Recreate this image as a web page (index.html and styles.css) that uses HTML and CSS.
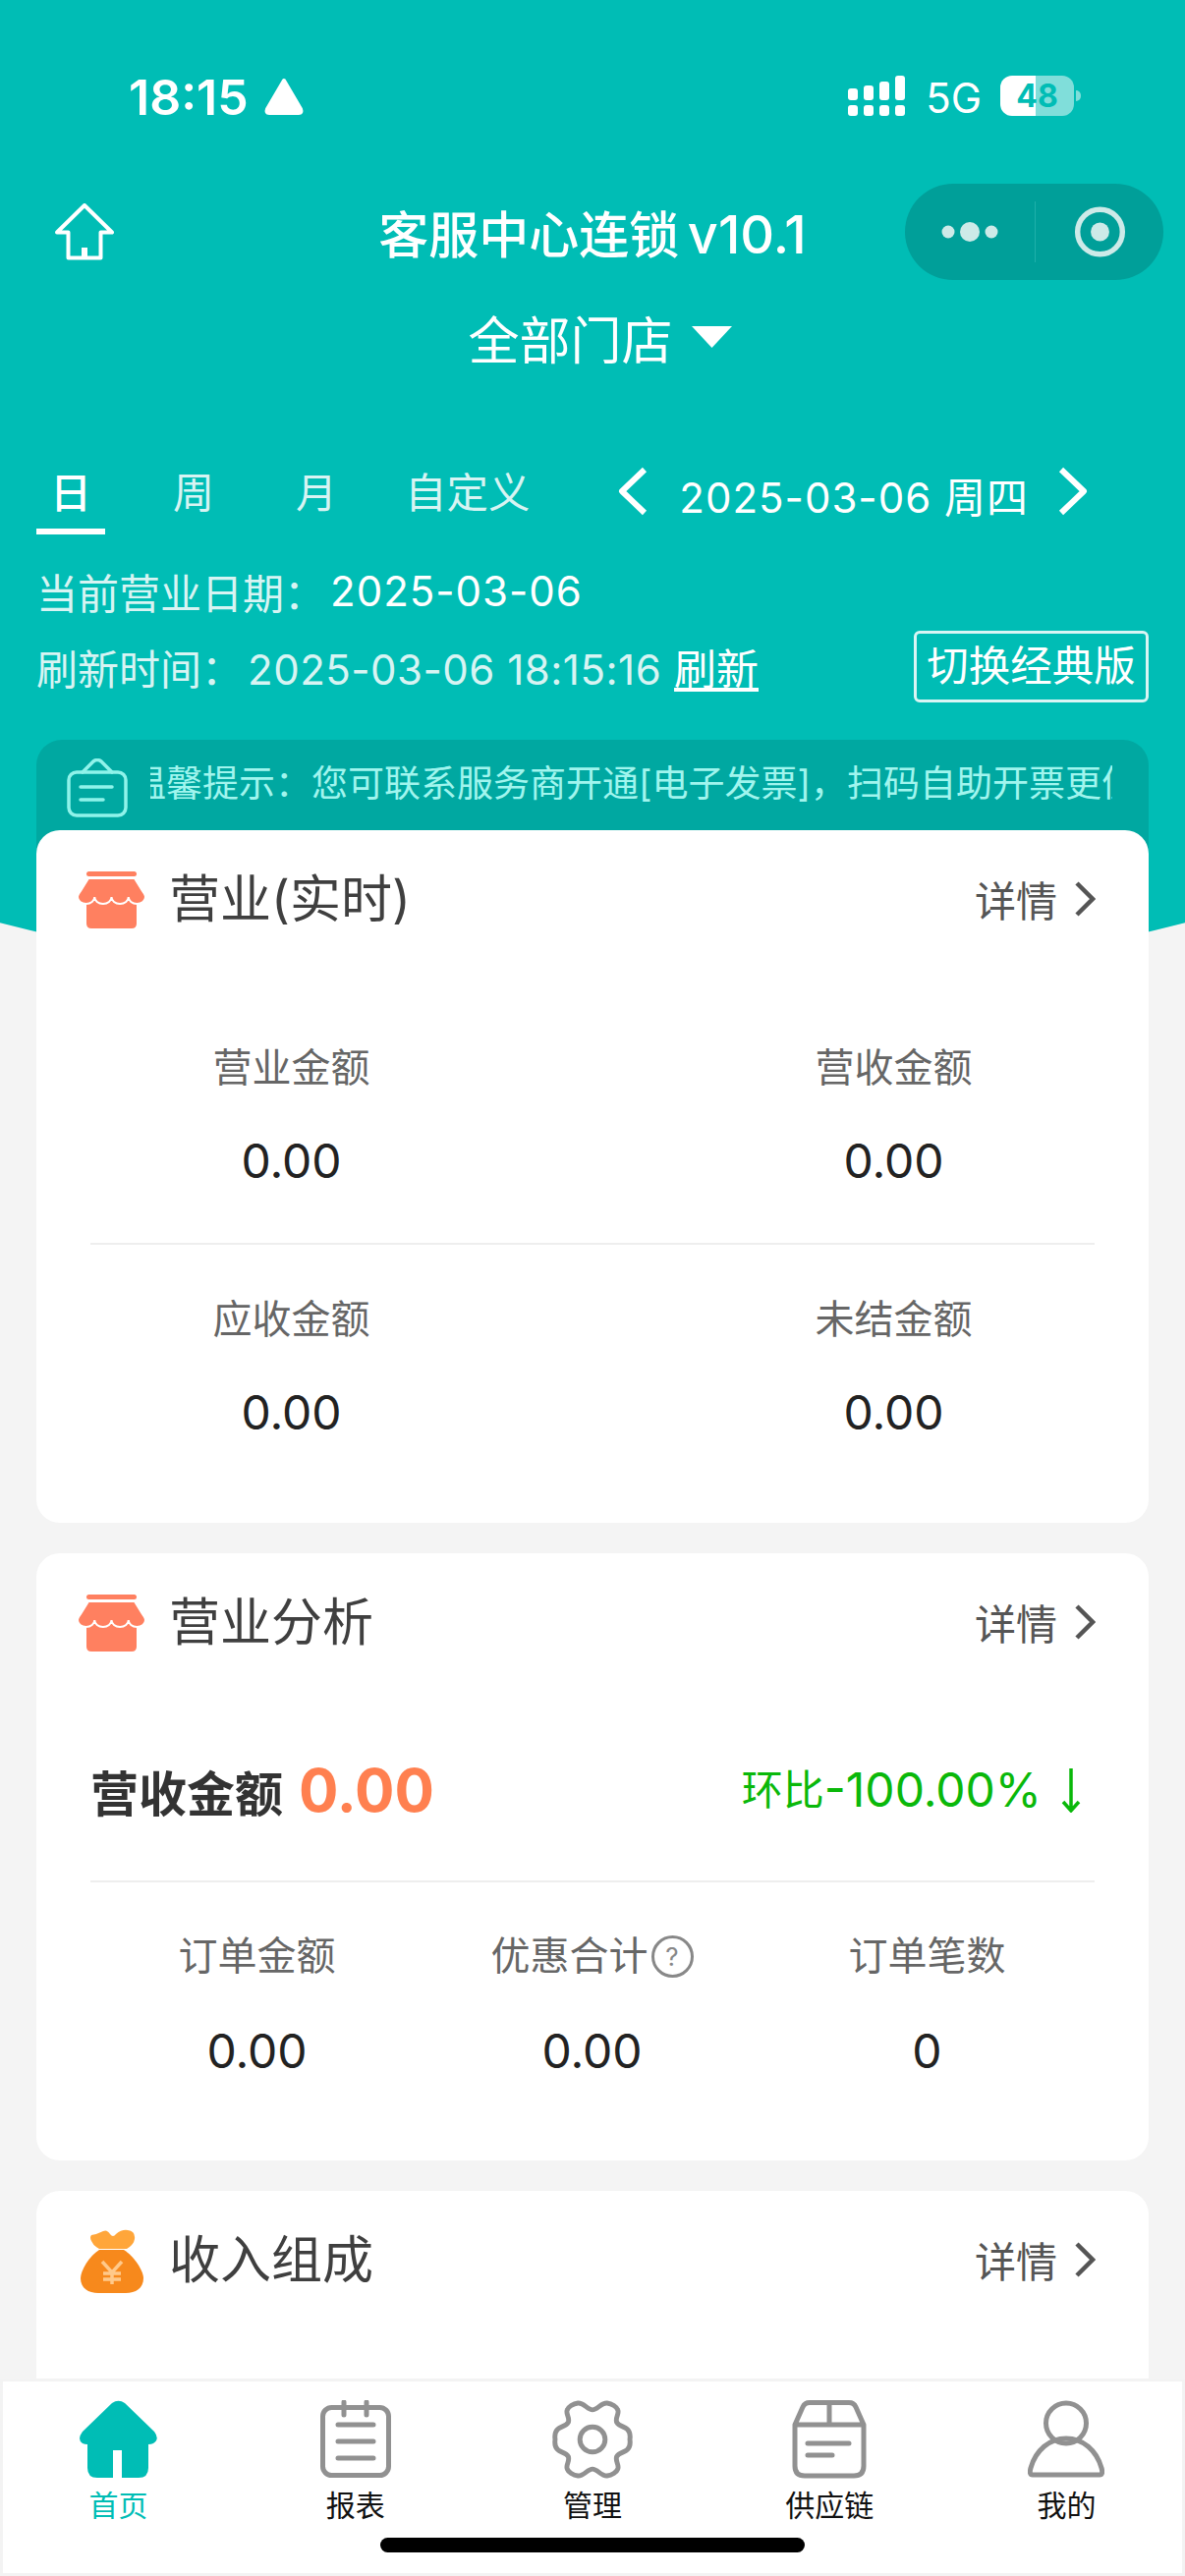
FILE: index.html
```html
<!DOCTYPE html>
<html lang="zh-CN">
<head>
<meta charset="utf-8">
<title>客服中心连锁</title>
<link rel="stylesheet" href="styles.css">
</head>
<body>
<div class="page">
  <header class="hero">
    <div class="status">
      <span class="clock">18:15</span>
      <svg class="loc" width="42" height="38" viewBox="0 0 42 38"><path d="M21 3 L38 32 Q39.5 36 36 36 H6 Q2.5 36 4 32 Z" fill="#fff" stroke="#fff" stroke-width="4" stroke-linejoin="round"/></svg>
      <div class="status-right">
        <svg class="signal" width="58" height="41" viewBox="0 0 58 41" fill="#fff">
          <rect x="0" y="13" width="10" height="12" rx="3"/><rect x="16" y="10" width="10" height="15" rx="3"/><rect x="32" y="6" width="10" height="19" rx="3"/><rect x="48" y="0" width="10" height="25" rx="3"/>
          <rect x="0" y="30" width="10" height="11" rx="3"/><rect x="16" y="30" width="10" height="11" rx="3"/><rect x="32" y="30" width="10" height="11" rx="3"/><rect x="48" y="30" width="10" height="11" rx="3"/>
        </svg>
        <span class="net">5G</span>
        <span class="battery">48</span>
        <span class="battery-nub"></span>
      </div>
    </div>
    <nav class="navbar">
      <svg class="nav-home" width="60" height="58" viewBox="0 0 60 58"><path d="M30 2 L58 29.5 H46.5 V55.5 H13.5 V29.5 H2 Z" fill="none" stroke="#fff" stroke-width="4" stroke-linejoin="round"/><rect x="27" y="45" width="6" height="10" fill="#fff"/></svg>
      <h1 class="nav-title">客服中心连锁 <span class="nav-version">v10.1</span></h1>
      <div class="capsule">
        <svg class="capsule-part" width="132" height="62" viewBox="0 0 132 62" fill="#cdeae8"><circle cx="44" cy="31" r="6.5"/><circle cx="66" cy="31" r="10"/><circle cx="88" cy="31" r="6.5"/></svg>
        <svg class="capsule-part" width="131" height="62" viewBox="0 0 131 62" fill="none"><circle cx="66" cy="31" r="23" stroke="#cdeae8" stroke-width="5.5"/><circle cx="66" cy="31" r="9.5" fill="#cdeae8"/></svg>
      </div>
    </nav>
    <div class="store">
      <span>全部门店</span>
      <svg width="43" height="22" viewBox="0 0 43 22"><path d="M1 0 H42 L21.5 22 Z" fill="#fff"/></svg>
    </div>
    <div class="range">
      <div class="tabs">
        <span class="tab tab-on">日</span>
        <span class="tab">周</span>
        <span class="tab">月</span>
        <span class="tab tab-wide">自定义</span>
      </div>
      <div class="day-nav">
        <svg width="30" height="50" viewBox="0 0 30 50"><path d="M27 3 L4 25 L27 47" fill="none" stroke="#fff" stroke-width="6" stroke-linejoin="round"/></svg>
        <span class="day">2025-03-06 周四</span>
        <svg width="30" height="50" viewBox="0 0 30 50"><path d="M3 3 L26 25 L3 47" fill="none" stroke="#fff" stroke-width="6" stroke-linejoin="round"/></svg>
      </div>
    </div>
    <div class="info-row">
      <span class="info-label">当前营业日期：</span><span class="info-strong">2025-03-06</span>
    </div>
    <div class="info-row info-row-split">
      <div>
        <span class="info-label">刷新时间：</span><span class="info-time">2025-03-06 18:15:16</span>
        <a class="refresh">刷新</a>
      </div>
      <span class="classic">切换经典版</span>
    </div>
    <div class="notice">
      <svg class="notice-icon" width="62" height="60" viewBox="0 0 62 60" fill="none" stroke="#8ff3ea" stroke-width="3.5" stroke-linecap="round" stroke-linejoin="round"><path d="M16 14 L27 3 Q31 0 35 3 L46 14"/><rect x="2" y="14" width="58" height="44" rx="8"/><path d="M14 29 H46 M14 42 H37"/></svg>
      <div class="notice-window"><span class="notice-text">温馨提示：您可联系服务商开通[电子发票]，扫码自助开票更便捷</span></div>
    </div>
  </header>

  <main class="cards">
    <section class="card">
      <div class="card-head">
        <svg class="head-icon" width="67" height="58" viewBox="0 0 67 58"><use href="#shop"/></svg>
        <h2 class="card-title">营业(实时)</h2>
        <span class="more">详情<svg width="22" height="36" viewBox="0 0 22 36"><path d="M3 2 L19 18 L3 34" fill="none" stroke="#555" stroke-width="4.5"/></svg></span>
      </div>
      <div class="stats-body">
        <div class="stat-row">
          <div class="stat"><div class="stat-label">营业金额</div><div class="stat-value">0.00</div></div>
          <div class="stat"><div class="stat-label">营收金额</div><div class="stat-value">0.00</div></div>
        </div>
        <div class="stat-row stat-row-last">
          <div class="stat"><div class="stat-label">应收金额</div><div class="stat-value">0.00</div></div>
          <div class="stat"><div class="stat-label">未结金额</div><div class="stat-value">0.00</div></div>
        </div>
      </div>
    </section>

    <section class="card">
      <div class="card-head">
        <svg class="head-icon" width="67" height="58" viewBox="0 0 67 58"><use href="#shop"/></svg>
        <h2 class="card-title">营业分析</h2>
        <span class="more">详情<svg width="22" height="36" viewBox="0 0 22 36"><path d="M3 2 L19 18 L3 34" fill="none" stroke="#555" stroke-width="4.5"/></svg></span>
      </div>
      <div class="analysis">
        <div class="headline">
          <span class="headline-label">营收金额</span>
          <span class="headline-value">0.00</span>
          <span class="trend"><span class="trend-cn">环比</span>-100.00%<svg class="trend-arrow" width="20" height="46" viewBox="0 0 20 46"><path d="M10 1 V44 M2 35 L10 44 L18 35" fill="none" stroke="#0ab80a" stroke-width="3.5"/></svg></span>
        </div>
        <div class="triple">
          <div class="stat"><div class="stat-label">订单金额</div><div class="stat-value">0.00</div></div>
          <div class="stat"><div class="stat-label">优惠合计<span class="hint">?</span></div><div class="stat-value">0.00</div></div>
          <div class="stat"><div class="stat-label">订单笔数</div><div class="stat-value">0</div></div>
        </div>
      </div>
    </section>

    <section class="card card-tall">
      <div class="card-head">
        <svg class="head-icon" width="67" height="65" viewBox="0 0 67 65">
          <path d="M21 21 H46 C56 27 66 42 66 50 C66 60 58 65 48 65 H20 C10 65 2 60 2 50 C2 42 11 27 21 21 Z" fill="#f7891c"/>
          <path d="M13 6 Q19 5 25 2 Q29 0 32 5 Q35 9 38 5 Q44 0 50 1 Q58 2 57 10 Q56 16 49 20 H21 Q15 17 13 12 Q11 8 13 6 Z" fill="#ffa63a"/>
          <path d="M24 33 L34 44 L44 33 M34 44 V56 M25 45 H43 M25 51 H43" fill="none" stroke="#ffc98a" stroke-width="3.5"/>
        </svg>
        <h2 class="card-title">收入组成</h2>
        <span class="more">详情<svg width="22" height="36" viewBox="0 0 22 36"><path d="M3 2 L19 18 L3 34" fill="none" stroke="#555" stroke-width="4.5"/></svg></span>
      </div>
    </section>
  </main>

  <footer class="tabbar">
    <div class="tabbar-item tabbar-on">
      <svg width="80" height="80" viewBox="0 0 80 80"><path d="M33 3 Q39.5 -1.5 46 3 L76 32 Q82 40 75 44 Q73 45 70 45 V69 Q70 79 60 79 H43 V51 H34 V79 H18 Q8 79 8 69 V45 Q5 45 3 44 Q-3 40 3 32 Z" fill="#00bdb5"/></svg>
      <span>首页</span>
    </div>
    <div class="tabbar-item">
      <svg width="72" height="80" viewBox="0 0 72 80" fill="none" stroke="#919191" stroke-width="5" stroke-linecap="round"><rect x="2.5" y="7.5" width="67" height="69" rx="9"/><path d="M24 2 V15 M47 2 V15 M18 25 H54 M18 42 H54 M18 59 H54"/></svg>
      <span>报表</span>
    </div>
    <div class="tabbar-item">
      <svg width="82" height="80" viewBox="0 0 82 81" fill="none" stroke="#919191" stroke-width="5"><path d="M41 10 C46 10 50 2.5 56 3 C61 3.5 66 7 67 10 C69 14 64 18 66 23 C68 27 74 27 77 30 C80 33 80 37 79.5 40.5 C80 44 80 48 77 51 C74 54 68 54 66 58 C64 63 69 67 67 71 C66 74 61 77.5 56 78 C50 78.5 46 71 41 71 C36 71 32 78.5 26 78 C21 77.5 16 74 15 71 C13 67 18 63 16 58 C14 54 8 54 5 51 C2 48 2 44 2.5 40.5 C2 37 2 33 5 30 C8 27 14 27 16 23 C18 18 13 14 15 10 C16 7 21 3.5 26 3 C32 2.5 36 10 41 10 Z"/><circle cx="41" cy="40.5" r="13"/></svg>
      <span>管理</span>
    </div>
    <div class="tabbar-item">
      <svg width="76" height="80" viewBox="0 0 76 80" fill="none" stroke="#919191" stroke-width="5" stroke-linecap="round" stroke-linejoin="round"><path d="M3 25 L11 7 Q13 2.5 18 2.5 H58 Q63 2.5 65 7 L73 25 V67 Q73 77 63 77 H13 Q3 77 3 67 Z M3 25 H73 M38 2.5 V25 M16 44 H58 M16 56 H41"/></svg>
      <span>供应链</span>
    </div>
    <div class="tabbar-item">
      <svg width="78" height="80" viewBox="0 0 78 80" fill="none" stroke="#919191" stroke-width="5" stroke-linejoin="round"><circle cx="39" cy="23.5" r="20.5"/><path d="M5 76 Q1 76 3 69 C8 51 22 39 39 39 C56 39 70 51 75 69 Q77 76 73 76 Z"/></svg>
      <span>我的</span>
    </div>
    <div class="home-bar"></div>
  </footer>
</div>

<svg class="sprite" width="0" height="0">
  <defs>
    <g id="shop">
      <rect x="8" y="0" width="51" height="5" rx="2.5" fill="#ff8060"/>
      <path d="M8 28 H59 V53 Q59 58 54 58 H13 Q8 58 8 53 Z" fill="#ff8060"/>
      <path d="M10 7 H57 L65 20 Q68 24 68 26 A8.6 7 0 0 1 50.75 26 A8.6 7 0 0 1 33.5 26 A8.6 7 0 0 1 16.25 26 A8.6 7 0 0 1 -1 26 Q-1 24 2 20 Z" fill="#ff8060" stroke="#fff" stroke-width="2"/>
    </g>
  </defs>
</svg>
</body>
</html>
```

FILE: styles.css
```css
* { box-sizing: border-box; margin: 0; padding: 0; }

html, body { height: 2622px; overflow: hidden; }

body {
  background: #f4f4f4;
  font-family: Inter, "Noto Sans CJK SC", sans-serif;
  color: #333;
}

.page { position: relative; height: 2622px; overflow: hidden; }
.sprite { position: absolute; }

/* Teal hero with a shallow curved bottom edge */
.hero {
  height: 1017px;
  background: #00bdb5;
  color: #fff;
  clip-path: ellipse(1600px 1014px at 50% 0);
}

/* Phone status bar */
.status { height: 187px; padding: 76px 106px 0 131px; display: flex; align-items: flex-start; }
.clock { font-size: 50px; line-height: 46px; font-weight: 600; }
.loc { margin: 3px 0 0 15px; }
.status-right { margin-left: auto; display: flex; align-items: flex-start; }
.signal { margin-top: 1px; }
.net { margin: 1px 0 0 21px; font-size: 42px; line-height: 46px; font-weight: 400; }
.battery {
  margin: 1px 0 0 19px;
  width: 75px;
  height: 41px;
  border-radius: 12px;
  background: linear-gradient(90deg, #fff 48%, rgba(255,255,255,.5) 48%);
  color: #00bdb5;
  font-size: 32px;
  line-height: 41px;
  font-weight: 700;
  text-align: center;
}
.battery-nub {
  margin: 16px 0 0 2px;
  width: 5px;
  height: 11px;
  border-radius: 0 6px 6px 0;
  background: rgba(255,255,255,.5);
}

/* Mini-program nav bar */
.navbar {
  height: 98px;
  padding: 0 22px;
  display: grid;
  grid-template-columns: 1fr auto 1fr;
  align-items: center;
}
.nav-home { margin-left: 34px; }
.nav-title { font-size: 51px; line-height: 60px; font-weight: 500; margin-top: 6px; white-space: nowrap; }
.nav-version { font-size: 54px; margin-left: -5px; }
.capsule {
  justify-self: end;
  width: 263px;
  height: 98px;
  border-radius: 49px;
  background: #009f99;
  display: flex;
  align-items: center;
}
.capsule-part + .capsule-part { border-left: 1px solid #1fb0aa; }

/* Store picker */
.store {
  height: 116px;
  padding-left: 16px;
  display: flex;
  align-items: center;
  justify-content: center;
  gap: 18px;
  font-size: 52px;
}

/* Day / week / month tabs and the date stepper */
.range { margin-top: 59px; padding: 0 99px 0 37px; display: flex; justify-content: space-between; }
.tabs { display: flex; gap: 55px; }
.tab {
  width: 70px;
  padding-top: 6px;
  height: 84px;
  line-height: 72px;
  font-size: 42px;
  text-align: center;
  white-space: nowrap;
  color: rgba(255,255,255,.85);
  border-bottom: 6px solid transparent;
}
.tab-on { color: #fff; font-weight: 500; border-bottom-color: #fff; }
.tab-wide { width: 126px; margin-left: 0; font-size: 42.5px; }
.day-nav { display: flex; align-items: center; gap: 30px; height: 84px; margin-top: -2px; }
.day { font-size: 42px; margin: 6px 0 0 2px; letter-spacing: 1px; white-space: nowrap; }

/* Business date and refresh lines */
.info-row {
  height: 78px;
  margin: 18px 37px 0;
  display: flex;
  align-items: center;
  font-size: 42px;
}
.info-row-split { height: 76px; margin-top: 0; justify-content: space-between; }
.info-label, .info-time { color: rgba(255,255,255,.85); }
.info-label { margin-right: 5px; }
.info-strong { color: #fff; letter-spacing: 1px; }
.info-time { letter-spacing: .5px; }
.refresh { color: #fff; font-size: 43px; text-decoration: underline; margin-left: 1px; }
.classic {
  width: 239px;
  height: 73px;
  border: 3px solid rgba(255,255,255,.85);
  border-radius: 6px;
  font-size: 42.5px;
  line-height: 66px;
  text-align: center;
  color: #fff;
}

.notice {
  margin: 37px 37px 0;
  height: 130px;
  padding: 19px 37px 0 31px;
  border-radius: 26px 26px 0 0;
  background: #00a8a1;
  display: flex;
  align-items: flex-start;
  gap: 23px;
}
.notice-window { flex: 1; overflow: hidden; height: 52px; }
.notice-text {
  display: block;
  margin-left: -21px;
  white-space: nowrap;
  font-size: 37px;
  line-height: 52px;
  color: #a0f5ee;
}

/* Cards */
.cards { margin-top: -172px; padding: 0 37px; position: relative; }
.card { background: #fff; border-radius: 24px; margin-bottom: 31px; }
.card-tall { height: 500px; }
.card-head { height: 142px; padding: 0 54px 0 43px; display: flex; align-items: center; }
.head-icon { flex: none; }
.card-title { margin-left: 25px; font-size: 52px; line-height: 70px; font-weight: 400; color: #3f3f3f; }
.more {
  margin-left: auto;
  margin-top: -3px;
  display: flex;
  align-items: center;
  gap: 17px;
  font-size: 42px;
  color: #555;
}

.stats-body { padding: 24px 55px 29px; }
.stat-row {
  display: grid;
  grid-template-columns: 1fr 1fr;
  column-gap: 204px;
  padding: 46px 0 48px;
  border-bottom: 2px solid #eee;
}
.stat-row-last { border-bottom: 0; }
.stat { text-align: center; }
.stat-label { font-size: 40px; line-height: 60px; color: #666; display: flex; justify-content: center; align-items: center; }
.stat-value { margin-top: 30px; font-size: 48px; line-height: 70px; color: #222; }

.analysis { padding: 0 55px 76px; }
.headline { padding: 64px 0 57px; height: 193px; display: flex; align-items: center; border-bottom: 2px solid #eee; }
.headline-label { font-size: 49px; font-weight: 600; color: #333; }
.headline-value { margin-left: 16px; font-size: 60px; font-weight: 700; color: #ff8050; }
.trend { margin-left: auto; margin-right: 14px; display: flex; align-items: center; font-size: 48px; line-height: 60px; color: #0ab80a; }
.trend-cn { font-size: 42px; }
.trend-arrow { margin-left: 20px; }
.triple { display: grid; grid-template-columns: repeat(3, 1fr); padding-top: 45px; margin-left: -1px; }
.triple .stat-value { margin-top: 32px; }
.hint {
  width: 43px;
  height: 43px;
  margin-left: 3px;
  border: 3px solid #888;
  border-radius: 50%;
  font-size: 26px;
  line-height: 37px;
  color: #888;
}

/* Bottom tab bar */
.tabbar {
  position: absolute;
  left: 0;
  right: 0;
  top: 2421px;
  height: 201px;
  background: #fff;
  box-shadow: inset 0 0 0 3px #f3f3f3;
  display: grid;
  grid-template-columns: repeat(5, 1fr);
  padding-top: 22px;
}
.tabbar-item {
  display: flex;
  flex-direction: column;
  align-items: center;
  font-size: 30px;
  line-height: 40px;
  color: #111;
}
.tabbar-item svg { height: 80px; margin-bottom: 7px; }
.tabbar-on { color: #00bdb5; }
.home-bar {
  position: absolute;
  left: 387px;
  top: 162px;
  width: 432px;
  height: 15px;
  border-radius: 8px;
  background: #000;
}
```
